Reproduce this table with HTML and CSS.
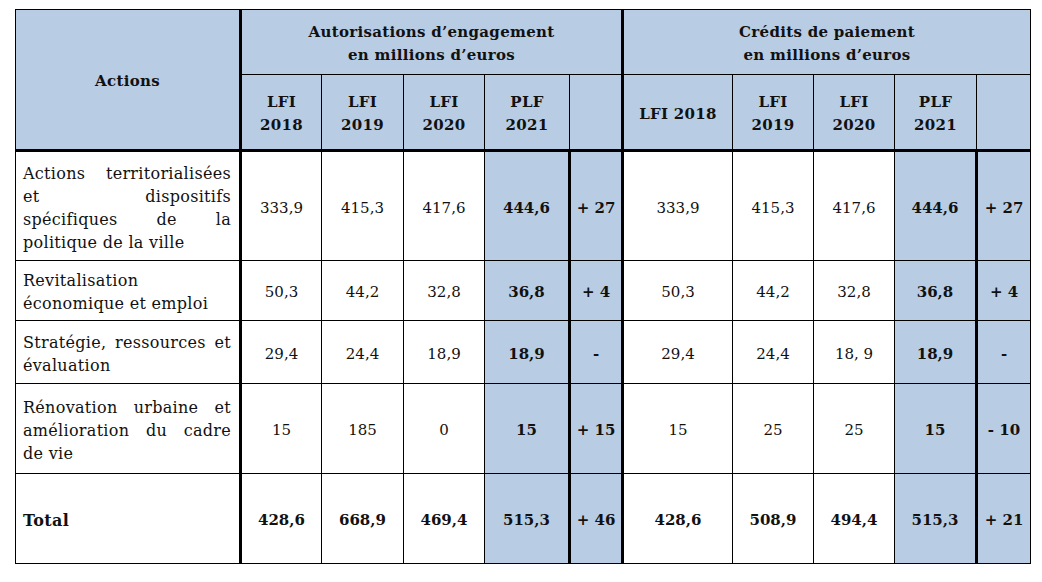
FILE: index.html
```html
<!DOCTYPE html>
<html lang="fr">
<head>
<meta charset="utf-8">
<title>Actions</title>
<link rel="stylesheet" href="styles.css">
</head>
<body>
<div class="page">
<table class="budget">
  <colgroup>
    <col class="c-act"><col class="c-a1"><col class="c-a2"><col class="c-a3"><col class="c-a4"><col class="c-a5">
    <col class="c-b1"><col class="c-b2"><col class="c-b3"><col class="c-b4"><col class="c-b5">
  </colgroup>
  <thead>
    <tr class="h1">
      <th rowspan="2" class="act-h thick-r thick-b">Actions</th>
      <th colspan="5" class="thick-r">Autorisations d’engagement<br>en millions d’euros</th>
      <th colspan="5">Crédits de paiement<br>en millions d’euros</th>
    </tr>
    <tr class="h2">
      <th class="thick-b">LFI<br>2018</th>
      <th class="thick-b">LFI<br>2019</th>
      <th class="thick-b">LFI<br>2020</th>
      <th class="thick-b">PLF<br>2021</th>
      <th class="thick-b thick-r"></th>
      <th class="thick-b">LFI 2018</th>
      <th class="thick-b">LFI<br>2019</th>
      <th class="thick-b">LFI<br>2020</th>
      <th class="thick-b">PLF<br>2021</th>
      <th class="thick-b"></th>
    </tr>
  </thead>
  <tbody>
    <tr class="r1">
      <td class="label thick-r"><span class="j">Actions territorialisées</span><span class="j">et dispositifs</span><span class="j">spécifiques de la</span><span>politique de la ville</span></td>
      <td>333,9</td><td>415,3</td><td>417,6</td><td class="hl b thick-r">444,6</td><td class="hl b thick-r">+ 27</td>
      <td>333,9</td><td>415,3</td><td>417,6</td><td class="hl b thick-r">444,6</td><td class="hl b">+ 27</td>
    </tr>
    <tr class="r2">
      <td class="label thick-r"><span>Revitalisation</span><span>économique et emploi</span></td>
      <td>50,3</td><td>44,2</td><td>32,8</td><td class="hl b thick-r">36,8</td><td class="hl b thick-r">+ 4</td>
      <td>50,3</td><td>44,2</td><td>32,8</td><td class="hl b thick-r">36,8</td><td class="hl b">+ 4</td>
    </tr>
    <tr class="r3">
      <td class="label thick-r"><span class="j">Stratégie, ressources et</span><span>évaluation</span></td>
      <td>29,4</td><td>24,4</td><td>18,9</td><td class="hl b thick-r">18,9</td><td class="hl b thick-r">-</td>
      <td>29,4</td><td>24,4</td><td>18, 9</td><td class="hl b thick-r">18,9</td><td class="hl b">-</td>
    </tr>
    <tr class="r4">
      <td class="label thick-r"><span class="j">Rénovation urbaine et</span><span class="j">amélioration du cadre</span><span>de vie</span></td>
      <td>15</td><td>185</td><td>0</td><td class="hl b thick-r">15</td><td class="hl b thick-r">+ 15</td>
      <td>15</td><td>25</td><td>25</td><td class="hl b thick-r">15</td><td class="hl b">- 10</td>
    </tr>
    <tr class="r5">
      <td class="label total thick-r"><span>Total</span></td>
      <td class="b">428,6</td><td class="b">668,9</td><td class="b">469,4</td><td class="hl b thick-r">515,3</td><td class="hl b thick-r">+ 46</td>
      <td class="b">428,6</td><td class="b">508,9</td><td class="b">494,4</td><td class="hl b thick-r">515,3</td><td class="hl b">+ 21</td>
    </tr>
  </tbody>
</table>
</div>
</body>
</html>
```

FILE: styles.css
```css
html, body {
  margin: 0;
  padding: 0;
  background: #ffffff;
}
.page {
  padding: 9px 0 0 15px;
}
.budget {
  border-collapse: collapse;
  table-layout: fixed;
  width: 1015px;
  font-family: "DejaVu Serif", "Liberation Serif", serif;
  color: #111;
}
.c-act { width: 225px; }
.c-a1 { width: 81px; }
.c-a2 { width: 82px; }
.c-a3 { width: 81px; }
.c-a4 { width: 85px; }
.c-a5 { width: 53px; }
.c-b1 { width: 110px; }
.c-b2 { width: 81px; }
.c-b3 { width: 81px; }
.c-b4 { width: 82px; }
.c-b5 { width: 54px; }

.budget th, .budget td {
  border: 1px solid #000;
  padding: 4px 0 0 0;
  text-align: center;
  vertical-align: middle;
}
.budget th {
  background: #b8cce4;
  font-weight: bold;
  font-size: 15px;
  line-height: 23px;
  letter-spacing: 0.3px;
}
.budget td {
  font-size: 15px;
  line-height: 23px;
}
.budget .thick-r { border-right: 3px solid #000; }
.budget .thick-b { border-bottom: 3px solid #000; }

.h1 { height: 65px; }
.h2 { height: 76px; }
.r1 { height: 110px; }
.r2 { height: 60px; }
.r3 { height: 63px; }
.r4 { height: 90px; }
.r5 { height: 90px; }

.budget td.label {
  text-align: left;
  padding: 3px 8px 0 7px;
  font-size: 16px;
  letter-spacing: 0.3px;
}
.label span {
  display: block;
  white-space: nowrap;
}
.label span.j {
  text-align: justify;
  text-align-last: justify;
  white-space: normal;
}
.budget td.total { font-weight: bold; }
.budget td.hl { background: #b8cce4; }
.budget td.b { font-weight: bold; }
```
